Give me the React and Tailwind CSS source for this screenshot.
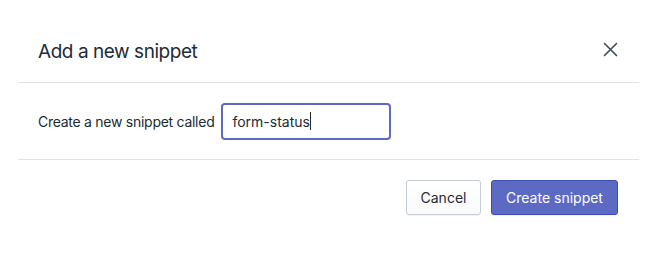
import React from 'react';

const App = () => {
  return (
    <div className="w-[657px] h-[256px] bg-white font-['Inter','Liberation_Sans',sans-serif] text-[#212b36]">
      {/* Header */}
      <div className="mx-[18px] h-[83px] border-b border-[#dfe3e8] flex items-start justify-between pl-[20px] pr-[21px] pt-[40px]">
        <h2 className="text-[19px] leading-6 font-normal text-[#212b36] tracking-[-0.45px]">Add a new snippet</h2>
        <button className="mt-[2px] w-[15px] h-[15px] flex items-center justify-center text-[#454f5b]">
          <svg width="15" height="15" viewBox="0 0 15 15" fill="none" stroke="currentColor" strokeWidth="1.7" strokeLinecap="round">
            <path d="M1.5 1.5l12 12M13.5 1.5l-12 12" />
          </svg>
        </button>
      </div>

      {/* Body */}
      <div className="mx-[18px] h-[77px] border-b border-[#dfe3e8] flex items-center pl-[20px] gap-[7px]">
        <label className="text-[14px] text-[#212b36] tracking-[-0.27px]">Create a new snippet called</label>
        <div className="w-[170px] h-[37px] border-2 border-[#5c6ac4] rounded-[4px] flex items-center px-[9px] text-[14px] text-[#212b36]">
          form-status
          <span className="w-px h-[18px] bg-[#212b36]"></span>
        </div>
      </div>

      {/* Footer */}
      <div className="mx-[18px] flex justify-end gap-[10px] pt-[20px] pr-[21px]">
        <button className="w-[75px] h-[35px] rounded-[3px] border border-[#c4cdd5] bg-gradient-to-b from-white to-[#f9fafb] text-[14px] text-[#212b36] shadow-[0_1px_0_rgba(22,29,37,0.05)]">
          Cancel
        </button>
        <button className="w-[127px] h-[35px] rounded-[3px] border border-[#3f4eae] bg-[#5c6ac4] text-[14px] text-white shadow-[0_1px_0_rgba(22,29,37,0.05)]">
          Create snippet
        </button>
      </div>
    </div>
  );
};

export default App;
